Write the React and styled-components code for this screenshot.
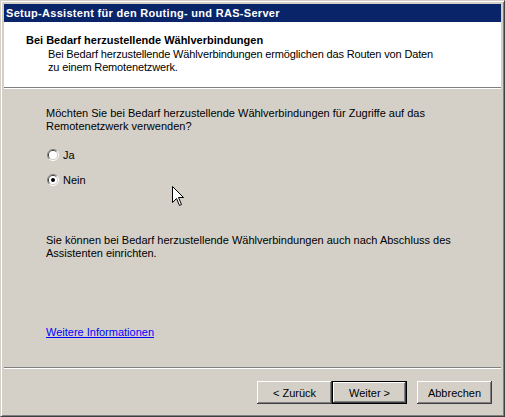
import React from 'react';
import styled, { createGlobalStyle, css } from 'styled-components';

const GlobalStyle = createGlobalStyle`
  html, body {
    margin: 0;
    padding: 0;
    background: #d4d0c8;
  }
  body {
    font-family: 'Liberation Sans', Arial, sans-serif;
    font-size: 11px;
  }
`;

const Window = styled.div`
  box-sizing: border-box;
  width: 505px;
  height: 417px;
  display: flex;
  flex-direction: column;
  padding: 3px;
  background: #d4d0c8;
  border: 1px solid;
  border-color: #d4d0c8 #404040 #404040 #d4d0c8;
  box-shadow: inset 1px 1px #fff, inset -1px -1px #808080;
`;

const TitleBar = styled.div`
  height: 18px;
  line-height: 18px;
  padding-left: 2px;
  background: #0a246a;
  color: #fff;
  font-weight: bold;
  font-size: 11px;
  letter-spacing: 0.3px;
  white-space: nowrap;
`;

const Client = styled.div`
  flex: 1;
  display: flex;
  flex-direction: column;
  background: #d4d0c8;
  color: #000;
  line-height: 13px;
`;

const Header = styled.div`
  height: 65px;
  box-sizing: border-box;
  padding: 12px 0 0 22px;
  background: #fff;
`;

const HeaderTitle = styled.div`
  font-weight: bold;
`;

const HeaderText = styled.div`
  margin-top: 1px;
  padding-left: 22px;
  letter-spacing: -0.15px;
`;

const Etched = styled.div`
  height: 0;
  border-top: 1px solid #808080;
  border-bottom: 1px solid #fff;
`;

const Body = styled.div`
  position: relative;
  height: 278px;
  box-sizing: border-box;
  padding: 18px 0 0 42px;
`;

const Paragraph = styled.p`
  margin: 0;
  margin-top: ${({ $top }) => $top || 0}px;
`;

const RadioGroup = styled.div`
  display: flex;
  flex-direction: column;
  gap: 13px;
  margin-top: 16px;
  margin-left: 1px;
`;

const RadioRow = styled.label`
  display: flex;
  align-items: center;
  gap: 4px;
  height: 12px;
`;

const Link = styled.a`
  display: inline-block;
  margin-top: 66px;
  color: #0000ff;
  text-decoration: underline;
`;

const Cursor = styled.svg`
  position: absolute;
  left: 168px;
  top: 97px;
`;

const Footer = styled.div`
  height: 44px;
  box-sizing: border-box;
  display: flex;
  justify-content: flex-end;
  align-items: flex-start;
  padding: 12px 9px 0 0;
`;

const ButtonPair = styled.div`
  display: flex;
  margin-right: 10px;
`;

const Button = styled.button`
  box-sizing: border-box;
  width: 75px;
  height: 23px;
  padding: 0;
  background: #d4d0c8;
  color: #000;
  font-family: 'Liberation Sans', Arial, sans-serif;
  font-size: 11px;
  border: none;
  box-shadow: inset -1px -1px #404040, inset 1px 1px #fff, inset -2px -2px #808080,
    inset 2px 2px #d4d0c8;

  ${({ $default }) =>
    $default &&
    css`
      border: 1px solid #000;
      box-shadow: inset -1px -1px #404040, inset 1px 1px #fff, inset -2px -2px #808080;
    `}
`;

const Radio = ({ checked }) => (
  <svg width="12" height="12" viewBox="0 0 12 12">
    <path d="M2.1 9.9 A5.5 5.5 0 0 1 9.9 2.1" fill="none" stroke="#808080" />
    <path d="M9.9 2.1 A5.5 5.5 0 0 1 2.1 9.9" fill="none" stroke="#fff" />
    <path d="M2.8 9.2 A4.5 4.5 0 0 1 9.2 2.8" fill="none" stroke="#404040" />
    <path d="M9.2 2.8 A4.5 4.5 0 0 1 2.8 9.2" fill="none" stroke="#d4d0c8" />
    <circle cx="6" cy="6" r="4" fill="#fff" />
    {checked && <circle cx="6" cy="6" r="2" fill="#000" />}
  </svg>
);

const App = () => (
  <>
    <GlobalStyle />
    <Window>
      <TitleBar>Setup-Assistent für den Routing- und RAS-Server</TitleBar>
      <Client>
        <Header>
          <HeaderTitle>Bei Bedarf herzustellende Wählverbindungen</HeaderTitle>
          <HeaderText>
            Bei Bedarf herzustellende Wählverbindungen ermöglichen das Routen von Daten
            <br />
            zu einem Remotenetzwerk.
          </HeaderText>
        </Header>
        <Etched />
        <Body>
          <Paragraph>
            Möchten Sie bei Bedarf herzustellende Wählverbindungen für Zugriffe auf das
            <br />
            Remotenetzwerk verwenden?
          </Paragraph>
          <RadioGroup>
            <RadioRow>
              <Radio />
              Ja
            </RadioRow>
            <RadioRow>
              <Radio checked />
              Nein
            </RadioRow>
          </RadioGroup>
          <Paragraph $top={48}>
            Sie können bei Bedarf herzustellende Wählverbindungen auch nach Abschluss des
            <br />
            Assistenten einrichten.
          </Paragraph>
          <Link href="#">Weitere Informationen</Link>
          <Cursor width="13" height="21" viewBox="0 0 13 21">
            <path
              d="M0.5 0.5 L0.5 16.5 L4.5 12.5 L7.5 19.5 L9.5 18.5 L6.5 11.5 L11.5 11.5 Z"
              fill="#fff"
              stroke="#000"
            />
          </Cursor>
        </Body>
        <Etched />
        <Footer>
          <ButtonPair>
            <Button>&lt; Zurück</Button>
            <Button $default>Weiter &gt;</Button>
          </ButtonPair>
          <Button>Abbrechen</Button>
        </Footer>
      </Client>
    </Window>
  </>
);

export default App;
